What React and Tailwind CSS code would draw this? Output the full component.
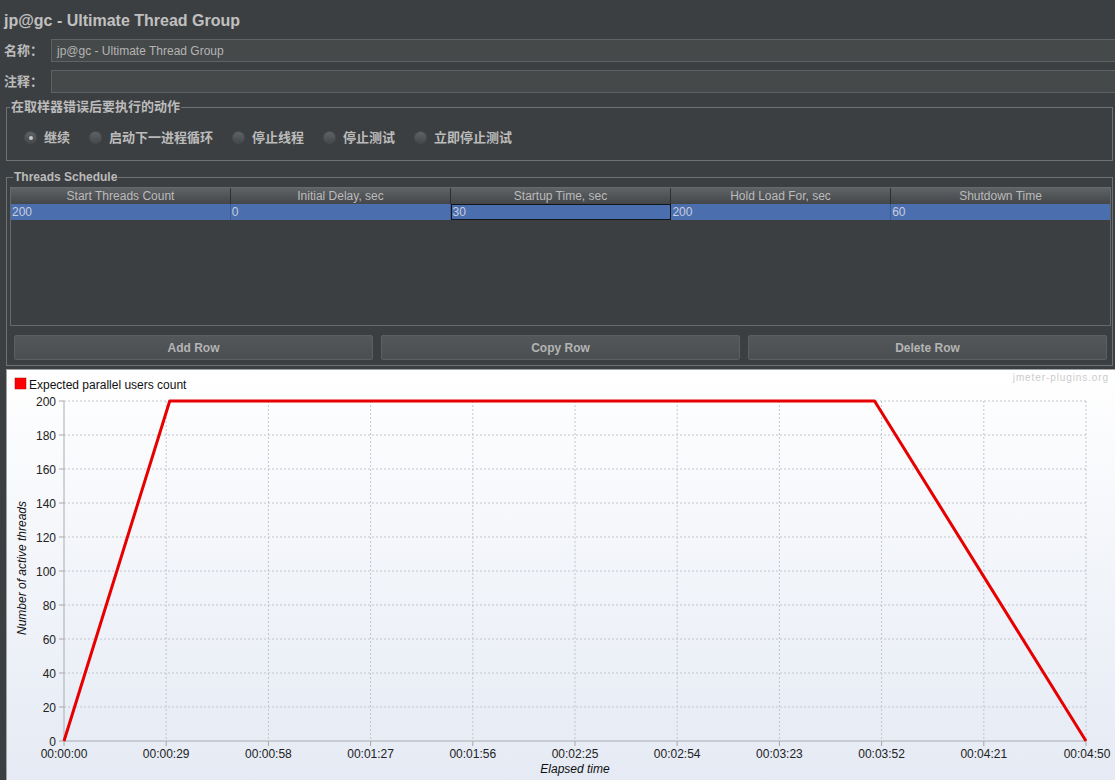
import React from "react";

const FONT = { fontFamily: '"Liberation Sans", "Noto Sans CJK SC", Arial, sans-serif' };

const columns = ["Start Threads Count", "Initial Delay, sec", "Startup Time, sec", "Hold Load For, sec", "Shutdown Time"];
const row = ["200", "0", "30", "200", "60"];
const radios = ["继续", "启动下一进程循环", "停止线程", "停止测试", "立即停止测试"];

// chart geometry in page coordinates
const X0 = 64;
const X1 = 1086;
const Y0 = 741;
const Y1 = 401;
const xLabels = ["00:00:00", "00:00:29", "00:00:58", "00:01:27", "00:01:56", "00:02:25", "00:02:54", "00:03:23", "00:03:52", "00:04:21", "00:04:50"];
const xAt = (sec) => X0 + (sec / 290) * (X1 - X0);
const yAt = (v) => Y0 - (v / 200) * (Y0 - Y1);

function Radio({ label, checked }) {
    return (
        <div className="flex items-center gap-[7px]">
            <div className="w-[13px] h-[13px] rounded-full bg-gradient-to-b from-[#5f6365] to-[#46494b] border border-[#4a4d4f] flex items-center justify-center">
                {checked && <div className="w-[4px] h-[4px] rounded-full bg-[#c8c8c8]" />}
            </div>
            <span className="text-[13px] leading-[17px] font-bold text-[#bbbbbb]">{label}</span>
        </div>
    );
}

function Chart() {
    const yTicks = [0, 20, 40, 60, 80, 100, 120, 140, 160, 180, 200];
    return (
        <svg width="1108" height="410" viewBox="7 370 1108 410" className="block">
            <text x="1109" y="381" textAnchor="end" fontSize="10" fill="#cccccc" letterSpacing="0.9" style={FONT}>
                jmeter-plugins.org
            </text>
            <rect x="15" y="378" width="11" height="11" fill="#ff0000" stroke="#b00000" strokeWidth="0.5" />
            <text x="29" y="388.5" fontSize="12" fill="#111" style={FONT}>
                Expected parallel users count
            </text>

            {/* grid */}
            {yTicks.map((v) => (
                <g key={v}>
                    {v > 0 && (
                        <line x1={X0} x2={X1} y1={yAt(v)} y2={yAt(v)} stroke="#c2c6cc" strokeDasharray="2 2" />
                    )}
                    <line x1={X0 - 5} x2={X0} y1={yAt(v)} y2={yAt(v)} stroke="#a8a8a8" />
                    <text x="56" y={yAt(v) + 4.5} textAnchor="end" fontSize="12" fill="#222" style={FONT}>
                        {v}
                    </text>
                </g>
            ))}
            {xLabels.map((l, i) => {
                const x = X0 + (i * (X1 - X0)) / 10;
                return (
                    <g key={l}>
                        {i > 0 && <line x1={x} x2={x} y1={Y1} y2={Y0} stroke="#c2c6cc" strokeDasharray="2 2" />}
                        <line x1={x} x2={x} y1={Y0} y2={Y0 + 5} stroke="#a8a8a8" />
                        <text x={i === 10 ? x + 1 : x} y="758" textAnchor="middle" fontSize="12" fill="#222" style={FONT}>
                            {l}
                        </text>
                    </g>
                );
            })}
            <line x1={X0} x2={X0} y1={Y1} y2={Y0} stroke="#a8acb2" />
            <line x1={X0} x2={X1} y1={Y0} y2={Y0} stroke="#a8acb2" />

            <polyline
                points={`${xAt(0)},${yAt(0)} ${xAt(30)},${yAt(200)} ${xAt(230)},${yAt(200)} ${xAt(290)},${yAt(0)}`}
                fill="none"
                stroke="#e60000"
                strokeWidth="3"
                strokeLinejoin="round"
            />

            <text x="575" y="773" textAnchor="middle" fontSize="12" fontStyle="italic" fill="#111" style={FONT}>
                Elapsed time
            </text>
            <text
                x="0"
                y="0"
                transform="translate(26 568) rotate(-90)"
                textAnchor="middle"
                fontSize="12"
                fontStyle="italic"
                fill="#111"
                style={FONT}
            >
                Number of active threads
            </text>
        </svg>
    );
}

export default function App() {
    return (
        <div className="w-[1115px] h-[780px] bg-[#3c3f41] overflow-hidden flex flex-col text-[#bbbbbb]" style={FONT}>
            <div className="h-[39px] pl-[4px] pt-[10px] text-[16px] leading-[22px] font-bold text-[#c0c0c0]">
                jp@gc - Ultimate Thread Group
            </div>

            <div className="flex items-center h-[23px]">
                <div className="w-[51px] pl-[4px] text-[13px] font-bold">名称：</div>
                <div className="flex-1 h-full bg-[#45494a] border border-r-0 border-[#5e6264] flex items-center pl-[5px] text-[12px] text-[#b4b4b4]">
                    jp@gc - Ultimate Thread Group
                </div>
            </div>
            <div className="flex items-center h-[23px] mt-[8px]">
                <div className="w-[51px] pl-[4px] text-[13px] font-bold">注释：</div>
                <div className="flex-1 h-full bg-[#45494a] border border-r-0 border-[#5e6264]" />
            </div>

            <fieldset className="ml-[6px] mr-[2px] mt-[6px] h-[62px] border border-[#6e7274]">
                <legend className="ml-[3px] px-[1px] text-[13px] leading-[16px] font-bold">在取样器错误后要执行的动作</legend>
                <div className="flex items-center gap-[19px] pl-[17px] mt-[14px]">
                    {radios.map((r, i) => (
                        <Radio key={r} label={r} checked={i === 0} />
                    ))}
                </div>
            </fieldset>

            <fieldset className="ml-[6px] mr-[2px] mt-[8px] h-[197px] border border-[#6e7274] pl-[3px] pr-[1px]">
                <legend className="ml-[3px] px-[1px] text-[12px] leading-[16px] font-bold">Threads Schedule</legend>
                <div className="mt-[2px] h-[139px] border border-[#65696b] flex flex-col">
                    <div className="flex h-[16px] bg-gradient-to-b from-[#606366] to-[#44474a]">
                        {columns.map((c) => (
                            <div
                                key={c}
                                className="flex-1 border-r border-[#2e3032] last:border-r-0 text-center text-[12px] leading-[16px] text-[#bbbbbb]"
                            >
                                {c}
                            </div>
                        ))}
                    </div>
                    <div className="flex h-[16px] bg-[#4b6eaf]">
                        {row.map((v, i) => (
                            <div
                                key={i}
                                className={
                                    i === 2
                                        ? "flex-1 border border-[#111418] text-[12px] leading-[14px] pl-[1px] text-[#c8cfdc]"
                                        : "flex-1 border-r border-[#3d5a90] last:border-r-0 text-[12px] leading-[16px] pl-[1px] text-[#c8cfdc]"
                                }
                            >
                                {v}
                            </div>
                        ))}
                    </div>
                </div>
                <div className="flex gap-[8px] px-[4px] mt-[9px]">
                    {["Add Row", "Copy Row", "Delete Row"].map((b) => (
                        <button
                            key={b}
                            className="flex-1 h-[25px] rounded-[2px] border border-[#5c6062] bg-gradient-to-b from-[#53575a] to-[#4a4e50] text-[12px] font-bold text-[#b4b4b4]"
                        >
                            {b}
                        </button>
                    ))}
                </div>
            </fieldset>

            <div className="ml-[6px] mt-[3px] flex-1 border-l border-t border-[#a0a3a6] bg-gradient-to-b from-white to-[#e5eaf4]">
                <Chart />
            </div>
        </div>
    );
}
